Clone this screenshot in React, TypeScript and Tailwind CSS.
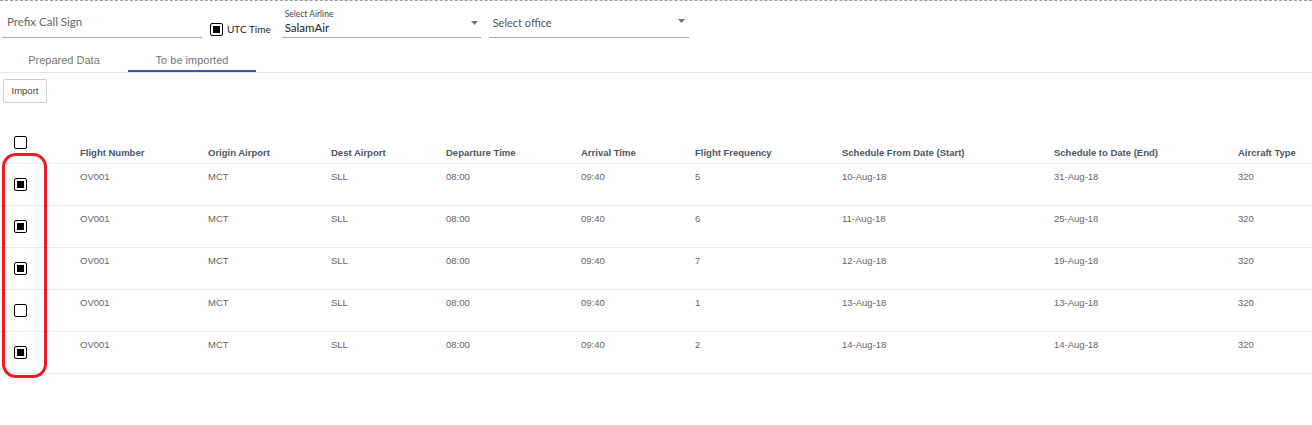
import React from 'react';

const rows = [
  { checked: true, freq: '5', from: '10-Aug-18', to: '31-Aug-18' },
  { checked: true, freq: '6', from: '11-Aug-18', to: '25-Aug-18' },
  { checked: true, freq: '7', from: '12-Aug-18', to: '19-Aug-18' },
  { checked: false, freq: '1', from: '13-Aug-18', to: '13-Aug-18' },
  { checked: true, freq: '2', from: '14-Aug-18', to: '14-Aug-18' },
];

const cols = 'grid grid-cols-[80px_128px_123px_115px_135px_114px_147px_212px_184px_74px]';

function Box({ checked }: { checked: boolean }) {
  if (checked) {
    return (
      <div className="w-[13px] h-[13px] border-[1.5px] border-black rounded-[2px] bg-white flex items-center justify-center">
        <div className="w-[7px] h-[7px] bg-black" />
      </div>
    );
  }
  return <div className="w-[13px] h-[13px] border border-black rounded-[2px] bg-white" />;
}

function Caret() {
  return (
    <svg width="7" height="4" viewBox="0 0 7 4" className="mt-[-1px]">
      <path d="M0 0h7L3.5 4z" fill="#757575" />
    </svg>
  );
}

export default function App() {
  return (
    <div className="relative w-[1312px] h-[425px] bg-white overflow-hidden">
      <div className="border-t border-dashed border-[#9a9a9a]" />

      {/* filters */}
      <div className="flex items-end h-[37px] font-['Lato',sans-serif]">
        <div className="ml-[2px] w-[200px] h-[24px] border-b border-[#a0aab2] pl-[5px] text-[11.5px] text-[#666] leading-[16px]">
          Prefix Call Sign
        </div>
        <div className="ml-[8px] mb-[1px] flex items-center gap-[4px]">
          <Box checked />
          <span className="text-[10px] text-[#222]">UTC Time</span>
        </div>
        <div className="ml-[11px] w-[199px] h-[30px] border-b border-[#a0aab2] flex items-end justify-between pl-[3px] pr-[3px] pb-[1px]">
          <div className="flex flex-col">
            <span className="text-[8.5px] text-[#444] leading-[10px]">Select Airline</span>
            <span className="text-[11.5px] text-[#222] leading-[16px] mt-[1px]">SalamAir</span>
          </div>
          <div className="mb-[11px]">
            <Caret />
          </div>
        </div>
        <div className="ml-[8px] w-[200px] h-[24px] border-b border-[#a0aab2] flex items-start justify-between pl-[4px] pr-[4px]">
          <span className="text-[11px] text-[#555] leading-[16px] pt-[1px]">Select office</span>
          <div className="mt-[6px]">
            <Caret />
          </div>
        </div>
      </div>

      {/* tabs */}
      <div className="mt-[7px] flex border-b border-[#e6e6e6] font-['Liberation_Sans',Arial,sans-serif] text-[11px]">
        <div className="w-[128px] h-[27px] flex items-center justify-center text-[#777] pt-[4px]">Prepared Data</div>
        <div className="w-[128px] h-[27px] flex items-center justify-center text-[#777] border-b-2 border-[#3f51b5] pt-[5px]">
          To be imported
        </div>
      </div>

      <button className="ml-[3px] mt-[6px] w-[44px] h-[24px] border border-[#cfcfcf] rounded-[2px] bg-white text-[9.5px] text-[#444] font-['Liberation_Sans',Arial,sans-serif]">
        Import
      </button>

      {/* table */}
      <div className="mt-[21px] font-['Liberation_Sans',Arial,sans-serif] text-[9.5px]">
        <div className={`${cols} h-[40px] items-end border-b border-[#ececec] text-[#4b565f] font-bold`}>
          <div className="pl-[14px] mb-[14px]">
            <Box checked={false} />
          </div>
          <div className="pb-[3px]">Flight Number</div>
          <div className="pb-[3px]">Origin Airport</div>
          <div className="pb-[3px]">Dest Airport</div>
          <div className="pb-[3px]">Departure Time</div>
          <div className="pb-[3px]">Arrival Time</div>
          <div className="pb-[3px]">Flight Frequency</div>
          <div className="pb-[3px]">Schedule From Date (Start)</div>
          <div className="pb-[3px]">Schedule to Date (End)</div>
          <div className="pb-[3px] whitespace-nowrap">Aircraft Type</div>
        </div>
        {rows.map((r, i) => (
          <div key={i} className={`${cols} h-[42px] border-b border-[#ececec] text-[#666]`}>
            <div className="pl-[14px] pt-[14px]">
              <Box checked={r.checked} />
            </div>
            <div className="pt-[6px]">OV001</div>
            <div className="pt-[6px]">MCT</div>
            <div className="pt-[6px]">SLL</div>
            <div className="pt-[6px]">08:00</div>
            <div className="pt-[6px]">09:40</div>
            <div className="pt-[6px]">{r.freq}</div>
            <div className="pt-[6px]">{r.from}</div>
            <div className="pt-[6px]">{r.to}</div>
            <div className="pt-[6px]">320</div>
          </div>
        ))}
      </div>

      {/* red annotation */}
      <div className="absolute left-[2px] top-[153px] w-[45px] h-[225px] border-[3px] border-[#ee1c24] rounded-[14px]" />
    </div>
  );
}
